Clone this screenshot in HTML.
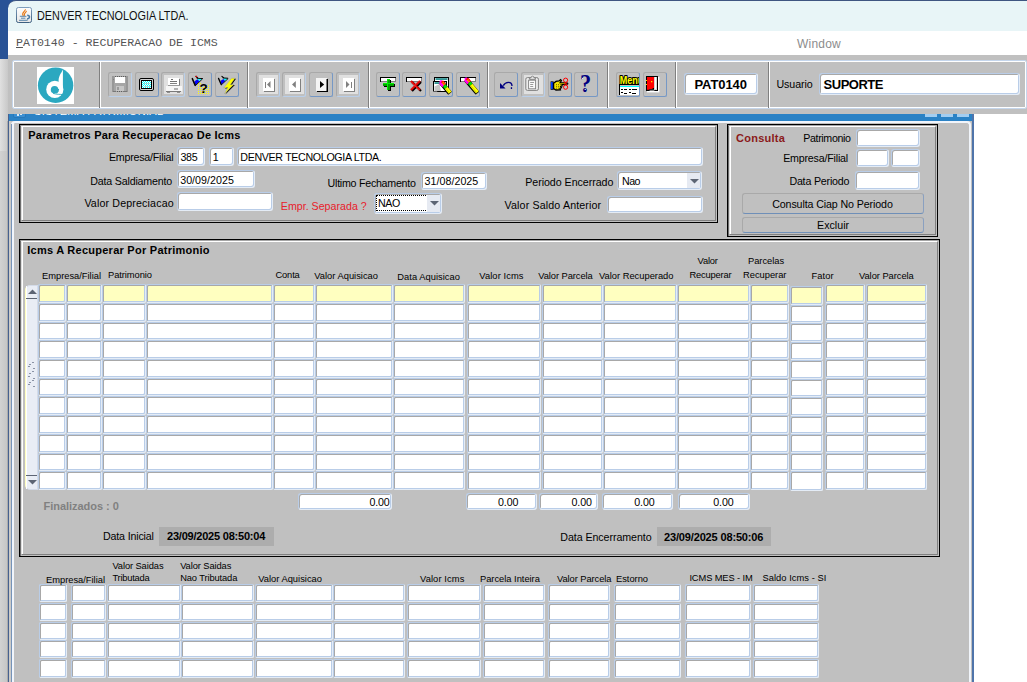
<!DOCTYPE html><html><head><meta charset="utf-8"><title>DENVER TECNOLOGIA LTDA.</title><style>
*{box-sizing:border-box;margin:0;padding:0}
html,body{width:1027px;height:682px;overflow:hidden;background:#fff}
body{position:relative;font-family:"Liberation Sans",sans-serif;font-size:11px;color:#000}
.a{position:absolute}
.t{position:absolute;white-space:nowrap}
.f{position:absolute;background:#fff;border:1px solid;border-color:#b9cde8 #e4ecf6 #e4ecf6 #b9cde8;border-radius:3px;box-shadow:inset 1px 1px 0 #a8a8a8,inset -1px -1px 0 #b9cde8}
.y{background:#ffffc0}
.g{border-radius:2px}
.tb{position:absolute;width:24px;height:25px;border:1px solid;border-color:#a9a9a9 #7698c5 #7698c5 #a9a9a9;border-radius:2.5px;top:72px}
.dis{border-color:#a9a9a9 #b9cfea #b9cfea #a9a9a9}
.tb svg{position:absolute;left:3px;top:3px}
.sep{position:absolute;top:62px;height:46px;width:2px;border-left:1px solid #808080;border-right:1px solid #fff}
.btn{position:absolute;border:1px solid;border-color:#a9a9a9 #8aa0c0 #6f8fb8 #a9a9a9;border-radius:3px}
</style></head><body>
<div class="a" style="left:0;top:0;width:8px;height:59px;background:#285296"></div>
<div class="a" style="left:0;top:59px;width:8px;height:92px;background:linear-gradient(90deg,#e0e0e0,#c8c8c8)"></div>
<div class="a" style="left:0;top:151px;width:8px;height:531px;background:linear-gradient(90deg,#d2d2d2,#c4c4c4)"></div>
<div class="a" style="left:7px;top:121px;width:1px;height:561px;background:#acacac"></div>
<div class="a" style="left:0;top:0;width:30px;height:30px;background:#285296"></div>
<div class="a" style="left:8px;top:0;width:1019px;height:31px;background:#e8f5f7;border-top-left-radius:8px;border-top:1px solid #3e5581"></div>
<div class="a" style="left:16px;top:7px;width:16px;height:16px"><svg width="16" height="16" viewBox="0 0 16 16"><defs><linearGradient id="jg" x1="0" y1="0" x2="0" y2="1"><stop offset="0" stop-color="#fdfdfd"/><stop offset="1" stop-color="#e6e6e6"/></linearGradient><linearGradient id="jb" x1="0" y1="0" x2="0" y2="1"><stop offset="0" stop-color="#7f9ebd"/><stop offset="1" stop-color="#3d5f80"/></linearGradient></defs><rect x="0.5" y="0.5" width="15" height="15" rx="1.8" fill="url(#jg)" stroke="url(#jb)"/><path d="M7.2,8.6 C5.2,6.4 8.2,5 9.4,2.8 M8.6,8.4 C7.2,6.6 10,5.6 10.4,4.2" fill="none" stroke="#e8740c" stroke-width="1.05" stroke-linecap="round"/><path d="M3.8,9.3 h6.6 M5,11.2 h4.4 M3,13.3 h8.6" stroke="#4a7ba5" stroke-width="0.9" fill="none"/><path d="M11.2,8.3 C14.4,8.3 14.2,11.8 11,11.9" fill="none" stroke="#4a7ba5" stroke-width="1.5"/></svg></div>
<div class="t" style="left:37px;top:9px;font-size:12.5px;line-height:15px;transform-origin:0 0;transform:scaleX(0.868);color:#111">DENVER TECNOLOGIA LTDA.</div>
<div class="a" style="left:8px;top:31px;width:1019px;height:24px;background:#fff"></div>
<div class="t" style="left:16px;top:36px;font-family:'Liberation Mono',monospace;font-size:11.6px;line-height:14px;color:#555"><span style="text-decoration:underline">P</span>AT0140 - RECUPERACAO DE ICMS</div>
<div class="t" style="left:797px;top:37px;font-size:12px;line-height:14px;color:#8c8c8c;letter-spacing:0.2px">Window</div>
<div class="a" style="left:8px;top:108px;width:966px;height:574px;background:#c0c0c0"></div>
<div class="a" style="left:8px;top:108px;width:965px;height:13px;background:#2b82c5"></div>
<div class="a" style="left:13px;top:108px;width:13px;height:10px;background:#3b8fd2;border:1px solid #2877b8;border-radius:0 0 2px 2px"></div>
<div class="a" style="left:17px;top:114px;width:2px;height:2px;background:#dbeaf7"></div><div class="a" style="left:20px;top:114px;width:2px;height:1px;background:#dbeaf7"></div>
<div class="t" style="left:34px;top:105px;color:#fff;font-size:11px;line-height:13px;letter-spacing:.3px">SISTEMA PATRIMONIAL</div>
<div class="a" style="left:925px;top:108px;width:12px;height:9px;background:#a3cdf0"></div>
<div class="a" style="left:941px;top:108px;width:12px;height:9px;background:#a3cdf0"></div>
<div class="a" style="left:957px;top:108px;width:12px;height:9px;background:#a3cdf0"></div>
<div class="a" style="left:8px;top:108px;width:1px;height:574px;background:#47618f"></div>
<div class="a" style="left:9px;top:121px;width:2px;height:561px;background:#cbcac8"></div>
<div class="a" style="left:11px;top:121px;width:960px;height:561px;border-left:3px solid #f1f5fb;border-top:2px solid #f1f5fb;border-right:2px solid #f1f5fb;border-top-left-radius:4px;border-top-right-radius:4px"></div>
<div class="a" style="left:11px;top:124px;width:1px;height:558px;background:#7593b9"></div>
<div class="a" style="left:972px;top:108px;width:2px;height:574px;background:#4f74aa"></div>
<div class="a" style="left:8px;top:55px;width:1019px;height:59px;background:#c0c0c0"></div>
<div class="a" style="left:12px;top:60px;width:1015px;height:49px;border:1px solid #c5d6ec;border-radius:2px"></div>
<div class="a" style="left:13px;top:61px;width:1013px;height:47px;border:1px solid #fff;border-radius:1px"></div>
<div class="a" style="left:37px;top:67px;width:37px;height:37px;background:#fff"><svg width="37" height="37" viewBox="0 0 37 37"><circle cx="18.6" cy="18.2" r="17.7" fill="#2ba8c0"/><circle cx="17.8" cy="22.4" r="8.6" fill="#fff"/><path d="M25.9,2.6 C24.4,6.4 21.6,8.6 21.6,14 L21.6,27 L25.9,25 Z" fill="#fff"/><circle cx="17.6" cy="22.7" r="3.8" fill="#2ba8c0"/><path d="M16,26.3 C19.5,27.6 23,27.2 26.3,27.6" fill="none" stroke="#2ba8c0" stroke-width="0.9"/><path d="M19.5,26 C21,25.6 21.5,24 21.6,22" fill="none" stroke="#2ba8c0" stroke-width="1"/></svg></div>
<div class="sep" style="left:99px"></div>
<div class="sep" style="left:247px"></div>
<div class="sep" style="left:368px"></div>
<div class="sep" style="left:487px"></div>
<div class="sep" style="left:607px"></div>
<div class="sep" style="left:675px"></div>
<div class="sep" style="left:768px"></div>
<div class="tb dis" style="left:108px"><svg width="22" height="23" viewBox="109 73 22 23" style="position:absolute;left:0;top:0" shape-rendering="crispEdges"><rect x="112" y="76" width="16" height="16" fill="#a6a6a6"/><rect x="112" y="76" width="2" height="16" fill="#989898"/><rect x="126" y="76" width="2" height="16" fill="#989898"/><rect x="115" y="77" width="10" height="6" fill="#fff"/><rect x="115" y="76" width="1" height="1" fill="#5e5e5e"/><rect x="117" y="76" width="1" height="1" fill="#5e5e5e"/><rect x="119" y="76" width="1" height="1" fill="#5e5e5e"/><rect x="121" y="76" width="1" height="1" fill="#5e5e5e"/><rect x="123" y="76" width="1" height="1" fill="#5e5e5e"/><rect x="125" y="76" width="1" height="1" fill="#5e5e5e"/><rect x="116" y="86" width="8" height="5" fill="#c6c6c6"/><rect x="117" y="87" width="2" height="3" fill="#9a9a9a"/><rect x="113" y="91" width="3" height="1" fill="#787878"/><rect x="123" y="91" width="4" height="1" fill="#787878"/><rect x="117" y="91" width="1" height="1" fill="#5e5e5e"/><rect x="119" y="91" width="1" height="1" fill="#5e5e5e"/><rect x="121" y="91" width="1" height="1" fill="#5e5e5e"/><rect x="113" y="79" width="1" height="1" fill="#808080"/></svg></div>
<div class="tb" style="left:135px"><svg width="22" height="23" viewBox="136 73 22 23" style="position:absolute;left:0;top:0"><defs><pattern id="ck" x="142" y="81" width="2" height="2" patternUnits="userSpaceOnUse"><rect x="0" y="0" width="2" height="2" fill="#00ffff"/><rect x="0" y="0" width="1" height="1" fill="#fff"/><rect x="1" y="1" width="1" height="1" fill="#fff"/></pattern></defs><rect x="139.5" y="78.5" width="14" height="12" rx="1.5" fill="#d4d4d4" stroke="#000"/><rect x="141.5" y="80.5" width="10" height="8" fill="url(#ck)" stroke="#000"/><rect x="144" y="83" width="6" height="1" fill="#b0d8d8"/><rect x="144" y="86" width="6" height="1" fill="#b0d8d8"/></svg></div>
<div class="tb dis" style="left:161px"><svg width="22" height="23" viewBox="162 73 22 23" style="position:absolute;left:0;top:0" shape-rendering="crispEdges"><rect x="164" y="75" width="19" height="19" fill="#e0e0e0"/><rect x="168" y="78" width="11" height="8" fill="#fff"/><rect x="179" y="79" width="1" height="7" fill="#7a7a7a"/><rect x="168" y="85" width="12" height="1" fill="#9a9a9a"/><rect x="171" y="79" width="2" height="1" fill="#6a6a6a"/><rect x="170" y="81" width="7" height="1" fill="#707070"/><rect x="170" y="83" width="7" height="1" fill="#808080"/><rect x="166" y="86" width="16" height="5" fill="#f6f6f6"/><rect x="174" y="88" width="4" height="2" fill="#b0b0b0"/><rect x="166" y="91" width="15" height="1" fill="#7a7a7a"/><rect x="167" y="92" width="3" height="1" fill="#909090"/><rect x="177" y="92" width="3" height="1" fill="#909090"/></svg></div>
<div class="tb" style="left:188px"><svg width="22" height="23" viewBox="189 73 22 23" style="position:absolute;left:0;top:0"><rect x="198" y="83" width="1" height="1" fill="#ffff00"/><rect x="200" y="83" width="1" height="1" fill="#ffff00"/><rect x="198" y="85" width="1" height="1" fill="#ffff00"/><rect x="208" y="85" width="1" height="1" fill="#ffff00"/><rect x="198" y="87" width="1" height="1" fill="#ffff00"/><rect x="200" y="87" width="1" height="1" fill="#ffff00"/><rect x="202" y="87" width="1" height="1" fill="#ffff00"/><rect x="204" y="87" width="1" height="1" fill="#ffff00"/><rect x="206" y="87" width="1" height="1" fill="#ffff00"/><rect x="208" y="87" width="1" height="1" fill="#ffff00"/><rect x="198" y="89" width="1" height="1" fill="#ffff00"/><rect x="200" y="89" width="1" height="1" fill="#ffff00"/><rect x="202" y="89" width="1" height="1" fill="#ffff00"/><rect x="204" y="89" width="1" height="1" fill="#ffff00"/><rect x="206" y="89" width="1" height="1" fill="#ffff00"/><rect x="208" y="89" width="1" height="1" fill="#ffff00"/><rect x="198" y="91" width="1" height="1" fill="#ffff00"/><rect x="200" y="91" width="1" height="1" fill="#ffff00"/><rect x="202" y="91" width="1" height="1" fill="#ffff00"/><rect x="204" y="91" width="1" height="1" fill="#ffff00"/><rect x="206" y="91" width="1" height="1" fill="#ffff00"/><rect x="208" y="91" width="1" height="1" fill="#ffff00"/><rect x="198" y="93" width="1" height="1" fill="#ffff00"/><rect x="200" y="93" width="1" height="1" fill="#ffff00"/><rect x="202" y="93" width="1" height="1" fill="#ffff00"/><rect x="204" y="93" width="1" height="1" fill="#ffff00"/><rect x="206" y="93" width="1" height="1" fill="#ffff00"/><rect x="208" y="93" width="1" height="1" fill="#ffff00"/><polygon points="195.3,85.5 194.5,81.2 197.6,79.3 199.5,81.3" fill="#0000ff" /><polygon points="197.6,79.3 198.2,78.5 202.1,78.8 199.5,81.3" fill="#00ffff" /><path d="M192.3,78.6 L195.2,85.4" fill="none" stroke="#000" stroke-width="1.50" stroke-linecap="round"/><path d="M195.3,85.7 L202.5,78.9" fill="none" stroke="#000" stroke-width="0.90"/><path d="M197.0,77.9 L198.2,78.3 L202.4,78.5" fill="none" stroke="#000" stroke-width="1.10" stroke-linecap="round"/><path d="M195.9,76.3 L197.6,77.9" fill="none" stroke="#000" stroke-width="1.20" stroke-linecap="round"/><circle cx="196.3" cy="76.5" r="0.8" fill="#ff0000"/><text x="199.6" y="93.2" font-family="Liberation Sans,sans-serif" font-weight="bold" font-size="13.5" fill="#000">?</text></svg></div>
<div class="tb" style="left:215px"><svg width="22" height="23" viewBox="216 73 22 23" style="position:absolute;left:0;top:0"><polygon points="221.3,84.7 220.6,80.8 223.5,79.0 225.2,80.9" fill="#0000ff" /><polygon points="223.5,79.0 224.0,78.3 227.6,78.6 225.2,80.9" fill="#00ffff" /><path d="M218.6,78.4 L221.2,84.6" fill="none" stroke="#000" stroke-width="1.38" stroke-linecap="round"/><path d="M221.3,84.9 L228.0,78.7" fill="none" stroke="#000" stroke-width="0.83"/><path d="M222.9,77.7 L224.0,78.1 L227.9,78.3" fill="none" stroke="#000" stroke-width="1.01" stroke-linecap="round"/><path d="M221.9,76.3 L223.5,77.7" fill="none" stroke="#000" stroke-width="1.10" stroke-linecap="round"/><polygon points="232.6,78.8 236,78.8 231.4,85.3 234.9,84.9 225.3,94.6 228.8,88.2 225,88.5" fill="#000" /><polygon points="231.6,78.2 235,78.2 230.4,84.8 233.8,84.4 224.4,94 227.8,87.6 223.6,87.9" fill="#ffff00" stroke="#9a9a9a" stroke-width="0.4"/></svg></div>
<div class="tb dis" style="left:256px"><svg width="22" height="23" viewBox="257 73 22 23" style="position:absolute;left:0;top:0"><rect x="259" y="75" width="19" height="19" fill="#e0e0e0"/><rect x="263" y="78" width="11" height="13" fill="#fff"/><rect x="274" y="79" width="1" height="13" fill="#808080"/><rect x="264" y="91" width="11" height="1" fill="#808080"/><rect x="265" y="82" width="1" height="6" fill="#808080"/><polygon points="267,84.5 270.5,81 270.5,88" fill="#808080" /></svg></div>
<div class="tb dis" style="left:282px"><svg width="22" height="23" viewBox="283 73 22 23" style="position:absolute;left:0;top:0"><rect x="285" y="75" width="19" height="19" fill="#e0e0e0"/><rect x="289" y="78" width="11" height="13" fill="#fff"/><rect x="300" y="79" width="1" height="13" fill="#808080"/><rect x="290" y="91" width="11" height="1" fill="#808080"/><polygon points="292,84.5 295.8,81 295.8,88" fill="#808080" /></svg></div>
<div class="tb" style="left:309px"><svg width="22" height="23" viewBox="310 73 22 23" style="position:absolute;left:0;top:0"><rect x="316" y="78" width="11" height="13" fill="#f4f4f4"/><rect x="327" y="79" width="1" height="13" fill="#000"/><rect x="317" y="91" width="11" height="1" fill="#000"/><rect x="326.5" y="79" width="0.5" height="12" fill="#000"/><polygon points="324.2,84.5 320,81 320,88" fill="#000" /></svg></div>
<div class="tb dis" style="left:336px"><svg width="22" height="23" viewBox="337 73 22 23" style="position:absolute;left:0;top:0"><rect x="339" y="75" width="19" height="19" fill="#e0e0e0"/><rect x="343" y="78" width="11" height="13" fill="#fff"/><rect x="354" y="79" width="1" height="13" fill="#808080"/><rect x="344" y="91" width="11" height="1" fill="#808080"/><polygon points="349.5,84.5 346,81 346,88" fill="#808080" /><rect x="351" y="82" width="1" height="6" fill="#808080"/></svg></div>
<div class="tb" style="left:376px"><svg width="22" height="23" viewBox="377 73 22 23" style="position:absolute;left:0;top:0" shape-rendering="crispEdges"><rect x="380" y="77" width="16" height="5" fill="#000"/><rect x="381" y="78" width="15" height="4" fill="#808080"/><rect x="381" y="78" width="14" height="3" fill="#fff"/><rect x="388" y="80" width="3" height="11" fill="#000"/><rect x="384" y="84" width="11" height="3" fill="#000"/><rect x="387" y="79" width="3" height="11" fill="#00a000"/><rect x="383" y="83" width="11" height="3" fill="#00a000"/><rect x="387" y="79" width="1.4" height="11" fill="#00f000"/><rect x="383" y="83" width="11" height="1.2" fill="#00f000"/><rect x="387" y="79" width="3" height="1" fill="#00f000"/></svg></div>
<div class="tb" style="left:402px"><svg width="22" height="23" viewBox="403 73 22 23" style="position:absolute;left:0;top:0"><rect x="406" y="77" width="16" height="5" fill="#000"/><rect x="407" y="78" width="15" height="4" fill="#808080"/><rect x="407" y="78" width="14" height="3" fill="#fff"/><path d="M412,82 L421,91 M421,82 L412,91" stroke="#000" stroke-width="2.2" fill="none"/><path d="M411,81 L420,90 M420,81 L411,90" stroke="#d00000" stroke-width="2.2" fill="none"/><path d="M410.7,81.3 L419.3,90 M419.6,80.7 L411,89.4" stroke="#ff3030" stroke-width="0.9" fill="none"/></svg></div>
<div class="tb" style="left:429px"><svg width="22" height="23" viewBox="430 73 22 23" style="position:absolute;left:0;top:0"><rect x="434.5" y="77.5" width="14" height="10" fill="#fff" stroke="#000"/><rect x="435.5" y="78.3" width="12" height="1.5" fill="#007c7c"/><rect x="433.5" y="81.5" width="13" height="10" fill="#fff" stroke="#000"/><rect x="434.5" y="82.3" width="11" height="1.5" fill="#007c7c"/><polygon points="434.5,91 434.5,86.5 439.5,84 441,91" fill="#c6c6c6" /><rect x="433" y="91.5" width="4.2" height="1.2" fill="#c0c0c0"/><g transform="translate(440.6,81.2) rotate(50)"><rect x="1.4" y="-1.95" width="14.0" height="4.8" rx="0.8" fill="#000"/><rect x="-0.8" y="-1.45" width="2.6" height="2.9" rx="1.2" fill="#ff00ff"/><rect x="0.8" y="-2.55" width="4.8" height="5.1" rx="1" fill="#ff0000"/><rect x="0.8" y="0.3" width="4.6" height="2.25" fill="#ff00ff"/><rect x="2.4" y="-1.55" width="0.9" height="1.75" fill="#ffe000"/><rect x="4.0" y="-1.55" width="0.9" height="1.75" fill="#ffe000"/><rect x="5.6" y="-1.75" width="3.0" height="3.5" fill="#00e000"/><rect x="8.6" y="-1.75" width="6.199999999999999" height="3.5" fill="#ffff00"/><rect x="8.6" y="0.4" width="6.199999999999999" height="0.5" fill="#b8b800"/></g></svg></div>
<div class="tb" style="left:456px"><svg width="22" height="23" viewBox="457 73 22 23" style="position:absolute;left:0;top:0"><g shape-rendering="crispEdges"><rect x="460" y="77" width="16" height="5" fill="#000"/><rect x="461" y="78" width="15" height="4" fill="#808080"/><rect x="461" y="78" width="14" height="3" fill="#fff"/></g><g transform="translate(465.6,78.4) rotate(50)"><rect x="1.4" y="-1.95" width="17.5" height="4.8" rx="0.8" fill="#000"/><rect x="-0.8" y="-1.45" width="2.6" height="2.9" rx="1.2" fill="#ff00ff"/><rect x="0.8" y="-2.55" width="4.8" height="5.1" rx="1" fill="#ff0000"/><rect x="0.8" y="0.3" width="4.6" height="2.25" fill="#ff00ff"/><rect x="2.4" y="-1.55" width="0.9" height="1.75" fill="#ffe000"/><rect x="4.0" y="-1.55" width="0.9" height="1.75" fill="#ffe000"/><rect x="5.6" y="-1.75" width="3.0" height="3.5" fill="#00e000"/><rect x="8.6" y="-1.75" width="9.7" height="3.5" fill="#ffff00"/><rect x="8.6" y="0.4" width="9.7" height="0.5" fill="#b8b800"/></g></svg></div>
<div class="tb" style="left:494px"><svg width="22" height="23" viewBox="495 73 22 23" style="position:absolute;left:0;top:0"><polygon points="500,83 500,88.4 505.6,88.4" fill="#000080" /><path d="M503.3,85.6 C505.5,81.6 511.8,81 512,86" fill="none" stroke="#000080" stroke-width="1.3"/><rect x="510.8" y="87.2" width="1.3" height="1.8" fill="#000080"/></svg></div>
<div class="tb dis" style="left:521px"><svg width="22" height="23" viewBox="522 73 22 23" style="position:absolute;left:0;top:0"><g shape-rendering="crispEdges"><rect x="524" y="75" width="19" height="19" fill="#e0e0e0"/></g><rect x="525.8" y="77.6" width="12.6" height="12.8" rx="1.6" fill="#ececec" stroke="#808080" stroke-width="1"/><path d="M529.6,79.4 v-1.6 h1.4 a1.5,1.6 0 0 1 3,0 h1.4 v1.6 z" fill="#e4e4e4" stroke="#808080" stroke-width="0.9"/><rect x="528.6" y="80.2" width="7" height="8.6" fill="#fafafa" stroke="#808080" stroke-width="0.9"/><rect x="530.2" y="82" width="3.8" height="0.9" fill="#909090"/><rect x="530.2" y="84" width="3" height="0.9" fill="#909090"/><rect x="530.2" y="86" width="3" height="0.9" fill="#909090"/></svg></div>
<div class="tb" style="left:548px"><svg width="22" height="23" viewBox="549 73 22 23" style="position:absolute;left:0;top:0"><rect x="550.6" y="81.4" width="3" height="8.4" fill="#000"/><rect x="551" y="82" width="1.8" height="7.2" fill="#0040ff"/><path d="M553.6,83.2 L556,81.4 L559,81 L560.6,79.6 L561.4,80.6 L560.2,82.6 L567,82.8 L567,84.4 L562,84.6 L562,86 L560.6,86.4 L561.4,87.8 L560,88.4 L560.4,89.8 L556,90 L553.6,88.6 Z" fill="#f4e400" stroke="#000" stroke-width="1.3"/><path d="M556,84.6 h5 M556,86.4 h4.4 M556,88.2 h4" stroke="#000" stroke-width="0.5" stroke-dasharray="1 1"/><ellipse cx="565.6" cy="80.2" rx="2.1" ry="2.1" fill="none" stroke="#ff0000" stroke-width="1"/><ellipse cx="565.6" cy="87.2" rx="2.1" ry="2.1" fill="none" stroke="#ff0000" stroke-width="1"/><path d="M564.6,82.2 L567.2,85.2 M566.8,82.2 L564.4,85.2" stroke="#ff0000" stroke-width="0.9"/><rect x="567" y="83.2" width="1.4" height="1" fill="#000"/></svg></div>
<div class="tb" style="left:574px"><svg width="22" height="23" viewBox="575 73 22 23" style="position:absolute;left:0;top:0"><text x="580.0" y="92.2" font-family="Liberation Serif,serif" font-weight="bold" font-size="25.5" fill="#000080" textLength="11.2" lengthAdjust="spacingAndGlyphs">?</text><circle cx="582.6" cy="78.6" r="0.6" fill="#fff"/><circle cx="585.2" cy="89.4" r="0.6" fill="#fff"/></svg></div>
<div class="tb" style="left:616px"><svg width="22" height="23" viewBox="617 73 22 23" style="position:absolute;left:0;top:0"><text x="619.8" y="83.5" font-family="Liberation Sans,sans-serif" font-weight="bold" font-size="10" fill="#ffff00" stroke="#000" stroke-width="2" stroke-linejoin="round" paint-order="stroke" textLength="23.6" lengthAdjust="spacingAndGlyphs">Menu</text><g shape-rendering="crispEdges"><rect x="619" y="83.6" width="20" height="1.6" fill="#000"/><rect x="619" y="85" width="1" height="10" fill="#000"/><rect x="620" y="85.6" width="19" height="1.6" fill="#00ffff"/><rect x="620" y="87.4" width="19" height="7.6" fill="#fff"/><rect x="621" y="89" width="2" height="1.4" fill="#000"/><rect x="624" y="89.4" width="3" height="1" fill="#000"/><rect x="629" y="89" width="2" height="1.4" fill="#000"/><rect x="632" y="89.4" width="5" height="1" fill="#000"/><rect x="621" y="92" width="2" height="1.4" fill="#000"/><rect x="624" y="92.6" width="3" height="1" fill="#000"/><rect x="629" y="92" width="2" height="1.4" fill="#000"/><rect x="632" y="92.6" width="4" height="1" fill="#000"/></g></svg></div>
<div class="tb" style="left:643px"><svg width="22" height="23" viewBox="644 73 22 23" style="position:absolute;left:0;top:0"><rect x="647" y="77" width="12.4" height="15.4" fill="#fff"/><rect x="646" y="76" width="12" height="15" fill="#000"/><rect x="654" y="77" width="3" height="13" fill="#d6d6d6"/><rect x="655" y="77" width="1" height="12" fill="#fff"/><polygon points="647,77 654,77 654,88 652.6,88 652.6,89 649.4,89 649.4,89.8 647,89.8" fill="#ff0000" /><rect x="649.6" y="89.8" width="4.8" height="0.9" fill="#bdbdbd"/><rect x="651" y="81" width="1.3" height="1.3" fill="#ffe000"/><rect x="646" y="80" width="1" height="1" fill="#ffe000"/><rect x="646" y="84" width="1" height="1" fill="#ffe000"/></svg></div>
<div class="f" style="left:684px;top:73px;width:74px;height:22px"></div>
<div class="t" style="left:694.50px;top:77px;font-size:13px;line-height:15px;letter-spacing:-0.083px;font-weight:bold;">PAT0140</div>
<div class="t" style="left:776.50px;top:78px;font-size:10.67px;line-height:13px;letter-spacing:-0.108px;">Usuario</div>
<div class="f" style="left:819px;top:73px;width:201px;height:22px"></div>
<div class="t" style="left:823.60px;top:77px;font-size:13px;line-height:15px;letter-spacing:-0.496px;font-weight:bold;">SUPORTE</div>
<div class="a" style="left:19px;top:124px;width:699px;height:99px;border:1px solid #000"></div>
<div class="a" style="left:20px;top:125px;width:697px;height:97px;border-left:1px solid #6e6e6e;border-top:1px solid #a6a6a6"></div>
<div class="a" style="left:21px;top:126px;width:695px;height:95px;border-left:1px solid #dcdcdc;border-top:1px solid #fff;border-right:1px solid #808080;border-bottom:1px solid #808080"></div>
<div class="a" style="left:22px;top:127px;width:1px;height:93px;background:#fff"></div>
<div class="t" style="left:28.30px;top:129px;font-size:11px;line-height:13px;letter-spacing:0.210px;font-weight:bold;">Parametros Para Recuperacao De Icms</div>
<div class="t" style="left:108.90px;top:151px;font-size:10.67px;line-height:13px;letter-spacing:-0.210px;">Empresa/Filial</div>
<div class="f" style="left:177px;top:147px;width:28px;height:19px;"></div>
<div class="t" style="left:180.50px;top:151px;font-size:10.67px;line-height:13px;letter-spacing:-0.325px;">385</div>
<div class="f" style="left:209px;top:147px;width:25px;height:19px;"></div>
<div class="t" style="left:212.70px;top:151px;font-size:10.67px;line-height:13px;letter-spacing:0.000px;">1</div>
<div class="f" style="left:237px;top:147px;width:466px;height:19px;"></div>
<div class="t" style="left:240.30px;top:151px;font-size:10.67px;line-height:13px;letter-spacing:-0.332px;">DENVER TECNOLOGIA LTDA.</div>
<div class="t" style="left:90.20px;top:175px;font-size:10.67px;line-height:13px;letter-spacing:-0.178px;">Data Saldiamento</div>
<div class="f" style="left:177px;top:170px;width:78px;height:18px;"></div>
<div class="t" style="left:180.20px;top:174px;font-size:10.67px;line-height:13px;letter-spacing:0.036px;">30/09/2025</div>
<div class="t" style="left:327.60px;top:177px;font-size:10.67px;line-height:13px;letter-spacing:-0.256px;">Ultimo Fechamento</div>
<div class="f" style="left:421px;top:172px;width:66px;height:18px;"></div>
<div class="t" style="left:424.50px;top:175px;font-size:10.67px;line-height:13px;letter-spacing:0.047px;">31/08/2025</div>
<div class="t" style="left:525.20px;top:176px;font-size:10.67px;line-height:13px;letter-spacing:-0.038px;">Periodo Encerrado</div>
<div class="f" style="left:617px;top:171px;width:85px;height:19px;"></div>
<div class="t" style="left:622.00px;top:175px;font-size:10.67px;line-height:13px;letter-spacing:-0.562px;">Nao</div>
<div class="a" style="left:687px;top:173px;width:13px;height:15px;background:#e6eaf2"></div>
<svg class="a" style="left:690px;top:179px" width="9" height="5"><path d="M0 0h9L4.5 4.5z" fill="#5d6574"/></svg>
<div class="t" style="left:84.40px;top:197px;font-size:10.67px;line-height:13px;letter-spacing:0.150px;">Valor Depreciacao</div>
<div class="f" style="left:177px;top:192px;width:96px;height:19px;"></div>
<div class="t" style="left:280.80px;top:200px;font-size:10.67px;line-height:13px;letter-spacing:0.000px;color:#e8212b;">Empr. Separada ?</div>
<div class="f" style="left:374px;top:193px;width:68px;height:21px;"></div>
<div class="t" style="left:378.00px;top:197px;font-size:10.67px;line-height:13px;letter-spacing:-0.412px;">NAO</div>
<div class="a" style="left:376px;top:195px;width:50px;height:16px;border:1px dotted #000;border-right:none"></div>
<div class="a" style="left:427px;top:195px;width:13px;height:17px;background:#e6eaf2"></div>
<svg class="a" style="left:430px;top:201px" width="9" height="5"><path d="M0 0h9L4.5 4.5z" fill="#5d6574"/></svg>
<div class="t" style="left:504.60px;top:199px;font-size:10.67px;line-height:13px;letter-spacing:0.136px;">Valor Saldo Anterior</div>
<div class="f" style="left:607px;top:196px;width:96px;height:17px;"></div>
<div class="a" style="left:727px;top:124px;width:211px;height:113px;border:1px solid #000"></div>
<div class="a" style="left:728px;top:125px;width:209px;height:111px;border-left:1px solid #6e6e6e;border-top:1px solid #a6a6a6"></div>
<div class="a" style="left:729px;top:126px;width:207px;height:109px;border-left:1px solid #dcdcdc;border-top:1px solid #fff;border-right:1px solid #808080;border-bottom:1px solid #808080"></div>
<div class="a" style="left:730px;top:127px;width:1px;height:107px;background:#fff"></div>
<div class="t" style="left:736.10px;top:132px;font-size:11px;line-height:13px;letter-spacing:0.236px;font-weight:bold;color:#8b1a1a;">Consulta</div>
<div class="t" style="left:803.30px;top:132px;font-size:10.67px;line-height:13px;letter-spacing:-0.367px;">Patrimonio</div>
<div class="f" style="left:856px;top:129px;width:64px;height:18px;"></div>
<div class="t" style="left:783.20px;top:152px;font-size:10.67px;line-height:13px;letter-spacing:-0.194px;">Empresa/Filial</div>
<div class="f" style="left:856px;top:149px;width:33px;height:18px;"></div>
<div class="f" style="left:891px;top:149px;width:29px;height:18px;"></div>
<div class="t" style="left:789.40px;top:175px;font-size:10.67px;line-height:13px;letter-spacing:-0.195px;">Data Periodo</div>
<div class="f" style="left:855px;top:171px;width:65px;height:19px;"></div>
<div class="btn" style="left:742px;top:193px;width:182px;height:21px"></div>
<div class="t" style="left:772.20px;top:198px;font-size:10.67px;line-height:13px;letter-spacing:-0.112px;">Consulta Ciap No Periodo</div>
<div class="btn" style="left:742px;top:217px;width:182px;height:16px"></div>
<div class="t" style="left:817.00px;top:219px;font-size:10.67px;line-height:13px;letter-spacing:0.033px;">Excluir</div>
<div class="a" style="left:19px;top:239px;width:921px;height:318px;border:1px solid #000"></div>
<div class="a" style="left:20px;top:240px;width:919px;height:316px;border-left:1px solid #6e6e6e;border-top:1px solid #a6a6a6"></div>
<div class="a" style="left:21px;top:241px;width:917px;height:314px;border-left:1px solid #dcdcdc;border-top:1px solid #fff;border-right:1px solid #808080;border-bottom:1px solid #808080"></div>
<div class="a" style="left:22px;top:242px;width:1px;height:312px;background:#fff"></div>
<div class="t" style="left:27.20px;top:244px;font-size:11px;line-height:13px;letter-spacing:0.259px;font-weight:bold;">Icms A Recuperar Por Patrimonio</div>
<div class="f g y" style="left:38px;top:284px;width:28px;height:19px;"></div>
<div class="f g y" style="left:66px;top:284px;width:36px;height:19px;"></div>
<div class="f g y" style="left:102px;top:284px;width:44px;height:19px;"></div>
<div class="f g y" style="left:146px;top:284px;width:127px;height:19px;"></div>
<div class="f g y" style="left:273px;top:284px;width:42px;height:19px;"></div>
<div class="f g y" style="left:315px;top:284px;width:78px;height:19px;"></div>
<div class="f g y" style="left:393px;top:284px;width:72px;height:19px;"></div>
<div class="f g y" style="left:467px;top:284px;width:74px;height:19px;"></div>
<div class="f g y" style="left:542px;top:284px;width:61px;height:19px;"></div>
<div class="f g y" style="left:603px;top:284px;width:74px;height:19px;"></div>
<div class="f g y" style="left:677px;top:284px;width:73px;height:19px;"></div>
<div class="f g y" style="left:750px;top:284px;width:39px;height:19px;"></div>
<div class="f g y" style="left:790px;top:286px;width:33px;height:19px;"></div>
<div class="f g y" style="left:825px;top:284px;width:40px;height:19px;"></div>
<div class="f g y" style="left:866px;top:284px;width:61px;height:19px;"></div>
<div class="f g" style="left:38px;top:303px;width:28px;height:19px;"></div>
<div class="f g" style="left:66px;top:303px;width:36px;height:19px;"></div>
<div class="f g" style="left:102px;top:303px;width:44px;height:19px;"></div>
<div class="f g" style="left:146px;top:303px;width:127px;height:19px;"></div>
<div class="f g" style="left:273px;top:303px;width:42px;height:19px;"></div>
<div class="f g" style="left:315px;top:303px;width:78px;height:19px;"></div>
<div class="f g" style="left:393px;top:303px;width:72px;height:19px;"></div>
<div class="f g" style="left:467px;top:303px;width:74px;height:19px;"></div>
<div class="f g" style="left:542px;top:303px;width:61px;height:19px;"></div>
<div class="f g" style="left:603px;top:303px;width:74px;height:19px;"></div>
<div class="f g" style="left:677px;top:303px;width:73px;height:19px;"></div>
<div class="f g" style="left:750px;top:303px;width:39px;height:19px;"></div>
<div class="f g" style="left:790px;top:305px;width:33px;height:18px;"></div>
<div class="f g" style="left:825px;top:303px;width:40px;height:19px;"></div>
<div class="f g" style="left:866px;top:303px;width:61px;height:19px;"></div>
<div class="f g" style="left:38px;top:322px;width:28px;height:18px;"></div>
<div class="f g" style="left:66px;top:322px;width:36px;height:18px;"></div>
<div class="f g" style="left:102px;top:322px;width:44px;height:18px;"></div>
<div class="f g" style="left:146px;top:322px;width:127px;height:18px;"></div>
<div class="f g" style="left:273px;top:322px;width:42px;height:18px;"></div>
<div class="f g" style="left:315px;top:322px;width:78px;height:18px;"></div>
<div class="f g" style="left:393px;top:322px;width:72px;height:18px;"></div>
<div class="f g" style="left:467px;top:322px;width:74px;height:18px;"></div>
<div class="f g" style="left:542px;top:322px;width:61px;height:18px;"></div>
<div class="f g" style="left:603px;top:322px;width:74px;height:18px;"></div>
<div class="f g" style="left:677px;top:322px;width:73px;height:18px;"></div>
<div class="f g" style="left:750px;top:322px;width:39px;height:18px;"></div>
<div class="f g" style="left:790px;top:323px;width:33px;height:19px;"></div>
<div class="f g" style="left:825px;top:322px;width:40px;height:18px;"></div>
<div class="f g" style="left:866px;top:322px;width:61px;height:18px;"></div>
<div class="f g" style="left:38px;top:340px;width:28px;height:19px;"></div>
<div class="f g" style="left:66px;top:340px;width:36px;height:19px;"></div>
<div class="f g" style="left:102px;top:340px;width:44px;height:19px;"></div>
<div class="f g" style="left:146px;top:340px;width:127px;height:19px;"></div>
<div class="f g" style="left:273px;top:340px;width:42px;height:19px;"></div>
<div class="f g" style="left:315px;top:340px;width:78px;height:19px;"></div>
<div class="f g" style="left:393px;top:340px;width:72px;height:19px;"></div>
<div class="f g" style="left:467px;top:340px;width:74px;height:19px;"></div>
<div class="f g" style="left:542px;top:340px;width:61px;height:19px;"></div>
<div class="f g" style="left:603px;top:340px;width:74px;height:19px;"></div>
<div class="f g" style="left:677px;top:340px;width:73px;height:19px;"></div>
<div class="f g" style="left:750px;top:340px;width:39px;height:19px;"></div>
<div class="f g" style="left:790px;top:342px;width:33px;height:18px;"></div>
<div class="f g" style="left:825px;top:340px;width:40px;height:19px;"></div>
<div class="f g" style="left:866px;top:340px;width:61px;height:19px;"></div>
<div class="f g" style="left:38px;top:359px;width:28px;height:19px;"></div>
<div class="f g" style="left:66px;top:359px;width:36px;height:19px;"></div>
<div class="f g" style="left:102px;top:359px;width:44px;height:19px;"></div>
<div class="f g" style="left:146px;top:359px;width:127px;height:19px;"></div>
<div class="f g" style="left:273px;top:359px;width:42px;height:19px;"></div>
<div class="f g" style="left:315px;top:359px;width:78px;height:19px;"></div>
<div class="f g" style="left:393px;top:359px;width:72px;height:19px;"></div>
<div class="f g" style="left:467px;top:359px;width:74px;height:19px;"></div>
<div class="f g" style="left:542px;top:359px;width:61px;height:19px;"></div>
<div class="f g" style="left:603px;top:359px;width:74px;height:19px;"></div>
<div class="f g" style="left:677px;top:359px;width:73px;height:19px;"></div>
<div class="f g" style="left:750px;top:359px;width:39px;height:19px;"></div>
<div class="f g" style="left:790px;top:360px;width:33px;height:19px;"></div>
<div class="f g" style="left:825px;top:359px;width:40px;height:19px;"></div>
<div class="f g" style="left:866px;top:359px;width:61px;height:19px;"></div>
<div class="f g" style="left:38px;top:378px;width:28px;height:18px;"></div>
<div class="f g" style="left:66px;top:378px;width:36px;height:18px;"></div>
<div class="f g" style="left:102px;top:378px;width:44px;height:18px;"></div>
<div class="f g" style="left:146px;top:378px;width:127px;height:18px;"></div>
<div class="f g" style="left:273px;top:378px;width:42px;height:18px;"></div>
<div class="f g" style="left:315px;top:378px;width:78px;height:18px;"></div>
<div class="f g" style="left:393px;top:378px;width:72px;height:18px;"></div>
<div class="f g" style="left:467px;top:378px;width:74px;height:18px;"></div>
<div class="f g" style="left:542px;top:378px;width:61px;height:18px;"></div>
<div class="f g" style="left:603px;top:378px;width:74px;height:18px;"></div>
<div class="f g" style="left:677px;top:378px;width:73px;height:18px;"></div>
<div class="f g" style="left:750px;top:378px;width:39px;height:18px;"></div>
<div class="f g" style="left:790px;top:379px;width:33px;height:18px;"></div>
<div class="f g" style="left:825px;top:378px;width:40px;height:18px;"></div>
<div class="f g" style="left:866px;top:378px;width:61px;height:18px;"></div>
<div class="f g" style="left:38px;top:396px;width:28px;height:19px;"></div>
<div class="f g" style="left:66px;top:396px;width:36px;height:19px;"></div>
<div class="f g" style="left:102px;top:396px;width:44px;height:19px;"></div>
<div class="f g" style="left:146px;top:396px;width:127px;height:19px;"></div>
<div class="f g" style="left:273px;top:396px;width:42px;height:19px;"></div>
<div class="f g" style="left:315px;top:396px;width:78px;height:19px;"></div>
<div class="f g" style="left:393px;top:396px;width:72px;height:19px;"></div>
<div class="f g" style="left:467px;top:396px;width:74px;height:19px;"></div>
<div class="f g" style="left:542px;top:396px;width:61px;height:19px;"></div>
<div class="f g" style="left:603px;top:396px;width:74px;height:19px;"></div>
<div class="f g" style="left:677px;top:396px;width:73px;height:19px;"></div>
<div class="f g" style="left:750px;top:396px;width:39px;height:19px;"></div>
<div class="f g" style="left:790px;top:397px;width:33px;height:19px;"></div>
<div class="f g" style="left:825px;top:396px;width:40px;height:19px;"></div>
<div class="f g" style="left:866px;top:396px;width:61px;height:19px;"></div>
<div class="f g" style="left:38px;top:415px;width:28px;height:19px;"></div>
<div class="f g" style="left:66px;top:415px;width:36px;height:19px;"></div>
<div class="f g" style="left:102px;top:415px;width:44px;height:19px;"></div>
<div class="f g" style="left:146px;top:415px;width:127px;height:19px;"></div>
<div class="f g" style="left:273px;top:415px;width:42px;height:19px;"></div>
<div class="f g" style="left:315px;top:415px;width:78px;height:19px;"></div>
<div class="f g" style="left:393px;top:415px;width:72px;height:19px;"></div>
<div class="f g" style="left:467px;top:415px;width:74px;height:19px;"></div>
<div class="f g" style="left:542px;top:415px;width:61px;height:19px;"></div>
<div class="f g" style="left:603px;top:415px;width:74px;height:19px;"></div>
<div class="f g" style="left:677px;top:415px;width:73px;height:19px;"></div>
<div class="f g" style="left:750px;top:415px;width:39px;height:19px;"></div>
<div class="f g" style="left:790px;top:416px;width:33px;height:18px;"></div>
<div class="f g" style="left:825px;top:415px;width:40px;height:19px;"></div>
<div class="f g" style="left:866px;top:415px;width:61px;height:19px;"></div>
<div class="f g" style="left:38px;top:434px;width:28px;height:19px;"></div>
<div class="f g" style="left:66px;top:434px;width:36px;height:19px;"></div>
<div class="f g" style="left:102px;top:434px;width:44px;height:19px;"></div>
<div class="f g" style="left:146px;top:434px;width:127px;height:19px;"></div>
<div class="f g" style="left:273px;top:434px;width:42px;height:19px;"></div>
<div class="f g" style="left:315px;top:434px;width:78px;height:19px;"></div>
<div class="f g" style="left:393px;top:434px;width:72px;height:19px;"></div>
<div class="f g" style="left:467px;top:434px;width:74px;height:19px;"></div>
<div class="f g" style="left:542px;top:434px;width:61px;height:19px;"></div>
<div class="f g" style="left:603px;top:434px;width:74px;height:19px;"></div>
<div class="f g" style="left:677px;top:434px;width:73px;height:19px;"></div>
<div class="f g" style="left:750px;top:434px;width:39px;height:19px;"></div>
<div class="f g" style="left:790px;top:434px;width:33px;height:19px;"></div>
<div class="f g" style="left:825px;top:434px;width:40px;height:19px;"></div>
<div class="f g" style="left:866px;top:434px;width:61px;height:19px;"></div>
<div class="f g" style="left:38px;top:453px;width:28px;height:18px;"></div>
<div class="f g" style="left:66px;top:453px;width:36px;height:18px;"></div>
<div class="f g" style="left:102px;top:453px;width:44px;height:18px;"></div>
<div class="f g" style="left:146px;top:453px;width:127px;height:18px;"></div>
<div class="f g" style="left:273px;top:453px;width:42px;height:18px;"></div>
<div class="f g" style="left:315px;top:453px;width:78px;height:18px;"></div>
<div class="f g" style="left:393px;top:453px;width:72px;height:18px;"></div>
<div class="f g" style="left:467px;top:453px;width:74px;height:18px;"></div>
<div class="f g" style="left:542px;top:453px;width:61px;height:18px;"></div>
<div class="f g" style="left:603px;top:453px;width:74px;height:18px;"></div>
<div class="f g" style="left:677px;top:453px;width:73px;height:18px;"></div>
<div class="f g" style="left:750px;top:453px;width:39px;height:18px;"></div>
<div class="f g" style="left:790px;top:453px;width:33px;height:18px;"></div>
<div class="f g" style="left:825px;top:453px;width:40px;height:18px;"></div>
<div class="f g" style="left:866px;top:453px;width:61px;height:18px;"></div>
<div class="f g" style="left:38px;top:471px;width:28px;height:19px;"></div>
<div class="f g" style="left:66px;top:471px;width:36px;height:19px;"></div>
<div class="f g" style="left:102px;top:471px;width:44px;height:19px;"></div>
<div class="f g" style="left:146px;top:471px;width:127px;height:19px;"></div>
<div class="f g" style="left:273px;top:471px;width:42px;height:19px;"></div>
<div class="f g" style="left:315px;top:471px;width:78px;height:19px;"></div>
<div class="f g" style="left:393px;top:471px;width:72px;height:19px;"></div>
<div class="f g" style="left:467px;top:471px;width:74px;height:19px;"></div>
<div class="f g" style="left:542px;top:471px;width:61px;height:19px;"></div>
<div class="f g" style="left:603px;top:471px;width:74px;height:19px;"></div>
<div class="f g" style="left:677px;top:471px;width:73px;height:19px;"></div>
<div class="f g" style="left:750px;top:471px;width:39px;height:19px;"></div>
<div class="f g" style="left:790px;top:471px;width:33px;height:20px;"></div>
<div class="f g" style="left:825px;top:471px;width:40px;height:19px;"></div>
<div class="f g" style="left:866px;top:471px;width:61px;height:19px;"></div>
<div class="a" style="left:25px;top:285px;width:13px;height:205px;background:#e9edf5;border:1px solid #d4dbe8;border-left:1px solid #ffffc0;border-radius:5px 0 0 5px"></div>
<div class="a" style="left:26px;top:286px;width:1px;height:203px;background:#fff"></div>
<div class="a" style="left:26px;top:298px;width:11px;height:1px;background:#5d6574"></div>
<svg class="a" style="left:28px;top:289px" width="9" height="5"><path d="M0 5h9L4.5 0.5z" fill="#5d6574"/></svg>
<div class="a" style="left:26px;top:475px;width:11px;height:1px;background:#5d6574"></div>
<svg class="a" style="left:28px;top:480px" width="9" height="5"><path d="M0 0h9L4.5 4.5z" fill="#5d6574"/></svg>
<div class="a" style="left:32px;top:362px;width:2px;height:1px;background:#8a93a5"></div>
<div class="a" style="left:29px;top:364px;width:2px;height:1px;background:#8a93a5"></div>
<div class="a" style="left:28px;top:366px;width:2px;height:1px;background:#8a93a5"></div>
<div class="a" style="left:33px;top:368px;width:2px;height:1px;background:#8a93a5"></div>
<div class="a" style="left:32px;top:371px;width:2px;height:1px;background:#8a93a5"></div>
<div class="a" style="left:29px;top:373px;width:2px;height:1px;background:#8a93a5"></div>
<div class="a" style="left:28px;top:376px;width:2px;height:1px;background:#8a93a5"></div>
<div class="a" style="left:33px;top:378px;width:2px;height:1px;background:#8a93a5"></div>
<div class="a" style="left:32px;top:380px;width:2px;height:1px;background:#8a93a5"></div>
<div class="a" style="left:29px;top:382px;width:2px;height:1px;background:#8a93a5"></div>
<div class="a" style="left:28px;top:384px;width:2px;height:1px;background:#8a93a5"></div>
<div class="a" style="left:33px;top:386px;width:2px;height:1px;background:#8a93a5"></div>
<div class="t" style="left:42.00px;top:270px;font-size:9.33px;line-height:12px;letter-spacing:-0.010px;">Empresa/Filial</div>
<div class="t" style="left:108.00px;top:269px;font-size:9.33px;line-height:12px;letter-spacing:-0.069px;">Patrimonio</div>
<div class="t" style="left:275.50px;top:269px;font-size:9.33px;line-height:12px;letter-spacing:-0.150px;">Conta</div>
<div class="t" style="left:314.30px;top:270px;font-size:9.33px;line-height:12px;letter-spacing:0.005px;">Valor Aquisicao</div>
<div class="t" style="left:397.30px;top:271px;font-size:9.33px;line-height:12px;letter-spacing:0.035px;">Data Aquisicao</div>
<div class="t" style="left:479.30px;top:270px;font-size:9.33px;line-height:12px;letter-spacing:0.092px;">Valor Icms</div>
<div class="t" style="left:538.20px;top:270px;font-size:9.33px;line-height:12px;letter-spacing:-0.065px;">Valor Parcela</div>
<div class="t" style="left:599.00px;top:270px;font-size:9.33px;line-height:12px;letter-spacing:0.000px;">Valor Recuperado</div>
<div class="t" style="left:697.60px;top:255px;font-size:9.33px;line-height:12px;letter-spacing:-0.181px;">Valor</div>
<div class="t" style="left:689.40px;top:269px;font-size:9.33px;line-height:12px;letter-spacing:-0.162px;">Recuperar</div>
<div class="t" style="left:748.00px;top:255px;font-size:9.33px;line-height:12px;letter-spacing:-0.036px;">Parcelas</div>
<div class="t" style="left:743.00px;top:269px;font-size:9.33px;line-height:12px;letter-spacing:-0.013px;">Recuperar</div>
<div class="t" style="left:811.50px;top:270px;font-size:9.33px;line-height:12px;letter-spacing:0.088px;">Fator</div>
<div class="t" style="left:859.00px;top:270px;font-size:9.33px;line-height:12px;letter-spacing:-0.048px;">Valor Parcela</div>
<div class="t" style="left:43.60px;top:500px;font-size:11px;line-height:13px;letter-spacing:-0.039px;font-weight:bold;color:#808080;">Finalizados : 0</div>
<div class="f" style="left:298px;top:493px;width:94px;height:17px;"></div>
<div class="t" style="left:369.40px;top:496px;font-size:10.67px;line-height:13px;letter-spacing:-0.117px;">0.00</div>
<div class="f" style="left:466px;top:493px;width:71px;height:17px;"></div>
<div class="t" style="left:498.00px;top:496px;font-size:10.67px;line-height:13px;letter-spacing:-0.117px;">0.00</div>
<div class="f" style="left:539px;top:493px;width:59px;height:17px;"></div>
<div class="t" style="left:571.50px;top:496px;font-size:10.67px;line-height:13px;letter-spacing:-0.117px;">0.00</div>
<div class="f" style="left:602px;top:493px;width:71px;height:17px;"></div>
<div class="t" style="left:634.30px;top:496px;font-size:10.67px;line-height:13px;letter-spacing:-0.117px;">0.00</div>
<div class="f" style="left:678px;top:493px;width:72px;height:17px;"></div>
<div class="t" style="left:713.30px;top:496px;font-size:10.67px;line-height:13px;letter-spacing:-0.117px;">0.00</div>
<div class="t" style="left:103.00px;top:530px;font-size:10.67px;line-height:13px;letter-spacing:-0.159px;">Data Inicial</div>
<div class="a" style="left:159px;top:527px;width:115px;height:19px;background:#adadad"></div>
<div class="t" style="left:167.00px;top:530px;font-size:11px;line-height:13px;letter-spacing:-0.212px;font-weight:bold;">23/09/2025 08:50:04</div>
<div class="t" style="left:560.30px;top:531px;font-size:10.67px;line-height:13px;letter-spacing:-0.069px;">Data Encerramento</div>
<div class="a" style="left:657px;top:527px;width:114px;height:19px;background:#adadad"></div>
<div class="t" style="left:664.00px;top:531px;font-size:11px;line-height:13px;letter-spacing:-0.151px;font-weight:bold;">23/09/2025 08:50:06</div>
<div class="f g" style="left:39px;top:584px;width:28px;height:18px;"></div>
<div class="f g" style="left:71px;top:584px;width:35px;height:18px;"></div>
<div class="f g" style="left:107px;top:584px;width:74px;height:18px;"></div>
<div class="f g" style="left:181px;top:584px;width:73px;height:18px;"></div>
<div class="f g" style="left:255px;top:584px;width:78px;height:18px;"></div>
<div class="f g" style="left:333px;top:584px;width:72px;height:18px;"></div>
<div class="f g" style="left:407px;top:584px;width:74px;height:18px;"></div>
<div class="f g" style="left:483px;top:584px;width:62px;height:18px;"></div>
<div class="f g" style="left:548px;top:584px;width:62px;height:18px;"></div>
<div class="f g" style="left:614px;top:584px;width:67px;height:18px;"></div>
<div class="f g" style="left:685px;top:584px;width:66px;height:18px;"></div>
<div class="f g" style="left:753px;top:584px;width:66px;height:18px;"></div>
<div class="f g" style="left:39px;top:603px;width:28px;height:18px;"></div>
<div class="f g" style="left:71px;top:603px;width:35px;height:18px;"></div>
<div class="f g" style="left:107px;top:603px;width:74px;height:18px;"></div>
<div class="f g" style="left:181px;top:603px;width:73px;height:18px;"></div>
<div class="f g" style="left:255px;top:603px;width:78px;height:18px;"></div>
<div class="f g" style="left:333px;top:603px;width:72px;height:18px;"></div>
<div class="f g" style="left:407px;top:603px;width:74px;height:18px;"></div>
<div class="f g" style="left:483px;top:603px;width:62px;height:18px;"></div>
<div class="f g" style="left:548px;top:603px;width:62px;height:18px;"></div>
<div class="f g" style="left:614px;top:603px;width:67px;height:18px;"></div>
<div class="f g" style="left:685px;top:603px;width:66px;height:18px;"></div>
<div class="f g" style="left:753px;top:603px;width:66px;height:18px;"></div>
<div class="f g" style="left:39px;top:622px;width:28px;height:18px;"></div>
<div class="f g" style="left:71px;top:622px;width:35px;height:18px;"></div>
<div class="f g" style="left:107px;top:622px;width:74px;height:18px;"></div>
<div class="f g" style="left:181px;top:622px;width:73px;height:18px;"></div>
<div class="f g" style="left:255px;top:622px;width:78px;height:18px;"></div>
<div class="f g" style="left:333px;top:622px;width:72px;height:18px;"></div>
<div class="f g" style="left:407px;top:622px;width:74px;height:18px;"></div>
<div class="f g" style="left:483px;top:622px;width:62px;height:18px;"></div>
<div class="f g" style="left:548px;top:622px;width:62px;height:18px;"></div>
<div class="f g" style="left:614px;top:622px;width:67px;height:18px;"></div>
<div class="f g" style="left:685px;top:622px;width:66px;height:18px;"></div>
<div class="f g" style="left:753px;top:622px;width:66px;height:18px;"></div>
<div class="f g" style="left:39px;top:640px;width:28px;height:18px;"></div>
<div class="f g" style="left:71px;top:640px;width:35px;height:18px;"></div>
<div class="f g" style="left:107px;top:640px;width:74px;height:18px;"></div>
<div class="f g" style="left:181px;top:640px;width:73px;height:18px;"></div>
<div class="f g" style="left:255px;top:640px;width:78px;height:18px;"></div>
<div class="f g" style="left:333px;top:640px;width:72px;height:18px;"></div>
<div class="f g" style="left:407px;top:640px;width:74px;height:18px;"></div>
<div class="f g" style="left:483px;top:640px;width:62px;height:18px;"></div>
<div class="f g" style="left:548px;top:640px;width:62px;height:18px;"></div>
<div class="f g" style="left:614px;top:640px;width:67px;height:18px;"></div>
<div class="f g" style="left:685px;top:640px;width:66px;height:18px;"></div>
<div class="f g" style="left:753px;top:640px;width:66px;height:18px;"></div>
<div class="f g" style="left:39px;top:659px;width:28px;height:19px;"></div>
<div class="f g" style="left:71px;top:659px;width:35px;height:19px;"></div>
<div class="f g" style="left:107px;top:659px;width:74px;height:19px;"></div>
<div class="f g" style="left:181px;top:659px;width:73px;height:19px;"></div>
<div class="f g" style="left:255px;top:659px;width:78px;height:19px;"></div>
<div class="f g" style="left:333px;top:659px;width:72px;height:19px;"></div>
<div class="f g" style="left:407px;top:659px;width:74px;height:19px;"></div>
<div class="f g" style="left:483px;top:659px;width:62px;height:19px;"></div>
<div class="f g" style="left:548px;top:659px;width:62px;height:19px;"></div>
<div class="f g" style="left:614px;top:659px;width:67px;height:19px;"></div>
<div class="f g" style="left:685px;top:659px;width:66px;height:19px;"></div>
<div class="f g" style="left:753px;top:659px;width:66px;height:19px;"></div>
<div class="t" style="left:46.00px;top:574px;font-size:9.33px;line-height:12px;letter-spacing:-0.010px;">Empresa/Filial</div>
<div class="t" style="left:112.40px;top:560px;font-size:9.33px;line-height:12px;letter-spacing:-0.095px;">Valor Saidas</div>
<div class="t" style="left:112.40px;top:572px;font-size:9.33px;line-height:12px;letter-spacing:-0.228px;">Tributada</div>
<div class="t" style="left:180.20px;top:560px;font-size:9.33px;line-height:12px;letter-spacing:-0.095px;">Valor Saidas</div>
<div class="t" style="left:180.20px;top:572px;font-size:9.33px;line-height:12px;letter-spacing:-0.119px;">Nao Tributada</div>
<div class="t" style="left:258.20px;top:573px;font-size:9.33px;line-height:12px;letter-spacing:0.013px;">Valor Aquisicao</div>
<div class="t" style="left:420.00px;top:573px;font-size:9.33px;line-height:12px;letter-spacing:0.103px;">Valor Icms</div>
<div class="t" style="left:480.00px;top:573px;font-size:9.33px;line-height:12px;letter-spacing:-0.018px;">Parcela Inteira</div>
<div class="t" style="left:557.00px;top:573px;font-size:9.33px;line-height:12px;letter-spacing:-0.073px;">Valor Parcela</div>
<div class="t" style="left:616.00px;top:573px;font-size:9.33px;line-height:12px;letter-spacing:-0.021px;">Estorno</div>
<div class="t" style="left:689.40px;top:572px;font-size:9.33px;line-height:12px;letter-spacing:-0.121px;">ICMS MES - IM</div>
<div class="t" style="left:762.40px;top:572px;font-size:9.33px;line-height:12px;letter-spacing:0.054px;">Saldo Icms - SI</div>
</body></html>
